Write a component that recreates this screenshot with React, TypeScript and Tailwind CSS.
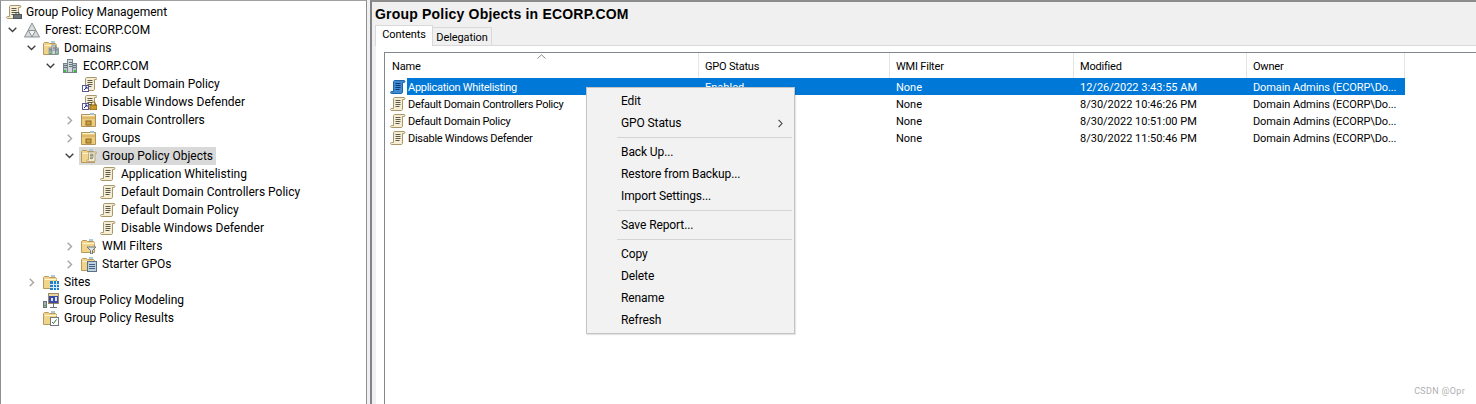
const Scroll = ({ blue = false }: { blue?: boolean }) => {
  const fill = blue ? "#3f8ad0" : "#f6eed4";
  const edge = blue ? "#1c64a8" : "#a8976a";
  const line = blue ? "#0b3c74" : "#5e5a4c";
  return (
    <g>
      <path d="M4.5 1.5H14c1.2 0 1.2 2 0 2h-1.5V13c0 1-.6 1.5-1.5 1.5H1.5c-1.2 0-1.2-2 0-2h2V3c0-.8.4-1.5 1-1.5z" fill={fill} stroke={edge} />
      <path d="M5.5 4.5h5M5.5 6.5h5M5.5 8.5h5M5.5 10.5h4" stroke={line} />
    </g>
  );
};

const Folder = () => (
  <g>
    <path d="M.5 14.5v-11l1-1h4l1 1h6l1 1v10z" fill="#f0d48a" stroke="#b8985c" />
    <path d="M1.5 5.5h12" stroke="#fff4d0" />
    <rect x="8" y="1" width="4" height="2" fill="#a9cbdd" />
  </g>
);

const Shortcut = () => (
  <g>
    <rect x="1.5" y="9.5" width="6" height="6" fill="#fff" stroke="#5a5a96" />
    <path d="M3 14l3-3M4 11h2v2" stroke="#1c2aa8" fill="none" />
  </g>
);

const Servers = () => (
  <g>
    <rect x="1.5" y="5.5" width="4" height="9" fill="#b9c3c9" stroke="#75838a" />
    <rect x="5.5" y="1.5" width="5" height="13" fill="#cfd7db" stroke="#75838a" />
    <rect x="10.5" y="5.5" width="4" height="9" fill="#b9c3c9" stroke="#75838a" />
    <path d="M2 7.5h3M2 9.5h3M7 4.5h3M7 6.5h3M7 8.5h3M11 7.5h3M11 9.5h3" stroke="#65737a" />
    <path d="M2 13h2M12 13h2" stroke="#35c035" strokeWidth="2" />
  </g>
);

const icons: Record<string, JSX.Element> = {
  root: (
    <g>
      <Scroll />
      <rect x="7.5" y="10.5" width="8" height="4" fill="#6d7478" stroke="#4f5559" />
      <path d="M10 10V8.5h3V10" fill="none" stroke="#4f5559" />
    </g>
  ),
  forest: (
    <g>
      <path d="M8 1L15.5 15H.5z" fill="#d8dbdc" stroke="#8b9093" />
      <path d="M4.5 8.5h7M4.5 8.5L8 15l3.5-6.5" fill="#f2f3f3" stroke="#8b9093" />
    </g>
  ),
  domains: (
    <g>
      <Folder />
      <g transform="translate(5 4) scale(.72)"><Servers /></g>
    </g>
  ),
  domain: <Servers />,
  link: (
    <g>
      <g transform="translate(1 0)"><Scroll /></g>
      <Shortcut />
    </g>
  ),
  linkLock: (
    <g>
      <g transform="translate(1 0)"><Scroll /></g>
      <Shortcut />
      <rect x="9" y="11" width="7" height="5" fill="#c99a2e" stroke="#8a6414" />
      <path d="M10.5 11V9.5c0-2 4-2 4 0V11" fill="none" stroke="#8a6414" />
    </g>
  ),
  ou: (
    <g>
      <path d="M.5 14.5v-12h14v12z" fill="#eccb7c" stroke="#b1925a" />
      <path d="M1.5 3.5h12" stroke="#fff2c9" />
      <path d="M1 6h13" stroke="#c9a65d" />
      <rect x="5" y="9" width="5" height="4" fill="#c9a040" stroke="#8a6a22" />
      <rect x="9" y="1" width="4" height="2" fill="#9fc5da" />
    </g>
  ),
  gpoFolder: (
    <g>
      <Folder />
      <g transform="translate(5 3) scale(.72)"><Scroll /></g>
    </g>
  ),
  wmi: (
    <g>
      <Folder />
      <path d="M6 9h9l-3.5 3.5V16h-2v-3.5z" fill="#dfe3e5" stroke="#6f7a80" />
    </g>
  ),
  starter: (
    <g>
      <Folder />
      <rect x="6.5" y="5.5" width="9" height="10" fill="#bfd0e0" stroke="#5d6f80" />
      <path d="M8 8.5h6M8 10.5h6M8 12.5h6" stroke="#3f6286" />
    </g>
  ),
  sites: (
    <g>
      <Folder />
      <rect x="7" y="7" width="9" height="9" fill="#1f7fc8" />
      <path d="M7 10.5h9M7 13.5h9M10.5 7v9M13.5 7v9" stroke="#d8ecf9" />
    </g>
  ),
  modeling: (
    <g>
      <rect x=".5" y="9.5" width="3" height="6" fill="#a3adb3" stroke="#6a7378" />
      <path d="M1 13.5h2" stroke="#35c035" />
      <rect x="5.5" y="1.5" width="10" height="10" fill="#e9d7a3" stroke="#9a8a5e" />
      <rect x="6" y="4" width="9" height="7" fill="#3a4aa8" />
      <path d="M8 6h2v3H8zM12 5h2v4h-2z" fill="#dfe6f5" />
      <path d="M7 15.5h7M10.5 11v4" stroke="#6a7378" />
    </g>
  ),
  results: (
    <g>
      <Folder />
      <rect x="7.5" y="7.5" width="8" height="8" fill="#fff" stroke="#6f7a80" />
      <path d="M9 12l1.5 1.5 3-4" fill="none" stroke="#2f6f40" />
    </g>
  ),
  policy: <Scroll />,
};

const Icon = ({ name, blue = false }: { name: string; blue?: boolean }) => (
  <svg width="16" height="16" viewBox="0 0 16 16" className="shrink-0">
    {blue ? <Scroll blue /> : icons[name]}
  </svg>
);

const Chevron = ({ dir }: { dir?: "open" | "closed" }) => (
  <span className="flex w-[19px] shrink-0 items-center justify-center">
    {dir === "open" && (
      <svg width="9" height="6" viewBox="0 0 9 6">
        <path d="M.7.7L4.5 4.5 8.3.7" fill="none" stroke="#404040" strokeWidth="1.4" />
      </svg>
    )}
    {dir === "closed" && (
      <svg width="6" height="9" viewBox="0 0 6 9">
        <path d="M.7.7L4.5 4.5.7 8.3" fill="none" stroke="#a6a6a6" strokeWidth="1.4" />
      </svg>
    )}
  </span>
);

type Node = {
  label: string;
  icon: string;
  indent: string;
  dir?: "open" | "closed";
  selected?: boolean;
};

const tree: Node[] = [
  { label: "Forest: ECORP.COM", icon: "forest", indent: "ml-0", dir: "open" },
  { label: "Domains", icon: "domains", indent: "ml-[19px]", dir: "open" },
  { label: "ECORP.COM", icon: "domain", indent: "ml-[38px]", dir: "open" },
  { label: "Default Domain Policy", icon: "link", indent: "ml-[57px]" },
  { label: "Disable Windows Defender", icon: "linkLock", indent: "ml-[57px]" },
  { label: "Domain Controllers", icon: "ou", indent: "ml-[57px]", dir: "closed" },
  { label: "Groups", icon: "ou", indent: "ml-[57px]", dir: "closed" },
  { label: "Group Policy Objects", icon: "gpoFolder", indent: "ml-[57px]", dir: "open", selected: true },
  { label: "Application Whitelisting", icon: "policy", indent: "ml-[76px]" },
  { label: "Default Domain Controllers Policy", icon: "policy", indent: "ml-[76px]" },
  { label: "Default Domain Policy", icon: "policy", indent: "ml-[76px]" },
  { label: "Disable Windows Defender", icon: "policy", indent: "ml-[76px]" },
  { label: "WMI Filters", icon: "wmi", indent: "ml-[57px]", dir: "closed" },
  { label: "Starter GPOs", icon: "starter", indent: "ml-[57px]", dir: "closed" },
  { label: "Sites", icon: "sites", indent: "ml-[19px]", dir: "closed" },
  { label: "Group Policy Modeling", icon: "modeling", indent: "ml-[19px]" },
  { label: "Group Policy Results", icon: "results", indent: "ml-[19px]" },
];

const TreeRow = ({ node }: { node: Node }) => (
  <div className={`flex h-[18px] items-center ${node.indent}`}>
    <Chevron dir={node.dir} />
    <div className={`flex h-[18px] items-center pl-[2px] pr-[3px] ${node.selected ? "bg-[#d9d9d9]" : ""}`}>
      <Icon name={node.icon} />
      <span className="ml-[5px] whitespace-nowrap">{node.label}</span>
    </div>
  </div>
);

const columns = [
  { label: "Name", w: "w-[314px] pl-[7px]" },
  { label: "GPO Status", w: "w-[191px] pl-[6px]" },
  { label: "WMI Filter", w: "w-[184px] pl-[6px]" },
  { label: "Modified", w: "w-[173px] pl-[6px]" },
  { label: "Owner", w: "w-[158px] pl-[6px]" },
];

const rows = [
  { name: "Application Whitelisting", modified: "12/26/2022 3:43:55 AM", selected: true },
  { name: "Default Domain Controllers Policy", modified: "8/30/2022 10:46:26 PM" },
  { name: "Default Domain Policy", modified: "8/30/2022 10:51:00 PM" },
  { name: "Disable Windows Defender", modified: "8/30/2022 11:50:46 PM" },
];

const Separator = () => (
  <div className="flex h-[7px] items-center pl-[29px] pr-px">
    <div className="h-px w-full bg-[#d4d4d4]" />
  </div>
);

const MenuItem = ({ label, arrow = false }: { label: string; arrow?: boolean }) => (
  <div className="flex h-[22px] items-center justify-between pl-[33px] pr-[10px] tracking-[-0.1px]">
    <span>{label}</span>
    {arrow && (
      <svg width="5" height="9" viewBox="0 0 5 9">
        <path d="M.6.8L4 4.5.6 8.2" fill="none" stroke="#404040" strokeWidth="1.1" />
      </svg>
    )}
  </div>
);

export default function App() {
  return (
    <div className="flex h-[404px] w-[1476px] overflow-hidden bg-[#f0f0f0] font-['Roboto',sans-serif] text-[12px] text-black">
      <aside className="h-full w-[367px] shrink-0 border-t border-r border-l border-t-[#a0a0a0] border-r-[#8a8f94] border-l-[#8a8f94] bg-white pt-[2px] pl-[2px]">
        <div className="flex h-[18px] items-center pl-[3px]">
          <Icon name="root" />
          <span className="ml-[4px] whitespace-nowrap">Group Policy Management</span>
        </div>
        {tree.map((n, i) => (
          <TreeRow key={i} node={n} />
        ))}
      </aside>

      <main className="ml-[3px] flex min-w-0 flex-1 flex-col border-t-2 border-l-2 border-t-[#8c8c8c] border-l-[#808489] bg-[#f0f0f0] pl-[3px]">
        <h1 className="mt-[4px] h-[17px] font-['Liberation_Sans',sans-serif] text-[14px] leading-[17px] font-bold tracking-[0.2px] text-black">
          Group Policy Objects in ECORP.COM
        </h1>
        <div className="mt-[2px] flex h-[21px] items-end border-b border-[#d9d9d9] text-[11px] tracking-[-0.1px]">
          <div className="-mb-px h-[21px] w-[58px] border border-b-0 border-[#d9d9d9] bg-white text-center leading-[18px]">
            Contents
          </div>
          <div className="h-[18px] w-[59px] border-t border-r border-[#d9d9d9] bg-[#f0f0f0] text-center leading-[19px]">
            Delegation
          </div>
        </div>
        <div className="ml-px flex flex-1 flex-col bg-white pt-[6px] pl-[8px] text-[11px]">
          <section className="relative flex-1 border-t border-l border-[#828790] bg-white">
            <span className="absolute top-px left-[152px]">
              <svg width="9" height="5" viewBox="0 0 9 5">
                <path d="M.5 4.5L4.5.8l4 3.7" fill="none" stroke="#8a8a8a" />
              </svg>
            </span>
            <div className="flex h-[25px] w-[1020px] bg-white tracking-[-0.2px]">
              {columns.map((c) => (
                <div key={c.label} className={`${c.w} flex items-center border-r border-[#e5e5e5] pt-[4px]`}>
                  {c.label}
                </div>
              ))}
            </div>
            {rows.map((r) => (
              <div key={r.name} className="flex h-[17px] w-[1020px] items-center">
                <div className="flex w-[22px] shrink-0 justify-end pr-[1px]">
                  <Icon name="policy" blue={r.selected} />
                </div>
                <div className={`flex h-[17px] min-w-0 flex-1 items-center pt-[4px] ${r.selected ? "bg-[#0078d7] text-white" : ""}`}>
                  <span className="w-[292px] shrink-0 pl-[1px] tracking-[-0.27px]">{r.name}</span>
                  <span className="w-[191px] shrink-0 pl-[6px]">Enabled</span>
                  <span className="w-[184px] shrink-0 pl-[6px]">None</span>
                  <span className="w-[173px] shrink-0 pl-[6px]">{r.modified}</span>
                  <span className="min-w-0 flex-1 pl-[6px] whitespace-nowrap tracking-[-0.1px]">Domain Admins (ECORP\Do...</span>
                </div>
              </div>
            ))}
            <div className="absolute top-[34px] left-[201px] w-[209px] border border-[#c4c4c4] bg-[#f2f2f2] p-px py-[2px] text-[12px] shadow-[1px_1px_1px_rgba(0,0,0,0.1)]">
              <MenuItem label="Edit" />
              <MenuItem label="GPO Status" arrow />
              <Separator />
              <MenuItem label="Back Up..." />
              <MenuItem label="Restore from Backup..." />
              <MenuItem label="Import Settings..." />
              <Separator />
              <MenuItem label="Save Report..." />
              <Separator />
              <MenuItem label="Copy" />
              <MenuItem label="Delete" />
              <MenuItem label="Rename" />
              <MenuItem label="Refresh" />
            </div>
            <span className="absolute top-[332px] right-[11px] text-[9px] tracking-[0.3px] text-[#b0b0b0]">CSDN @Opr</span>
          </section>
        </div>
      </main>
    </div>
  );
}
